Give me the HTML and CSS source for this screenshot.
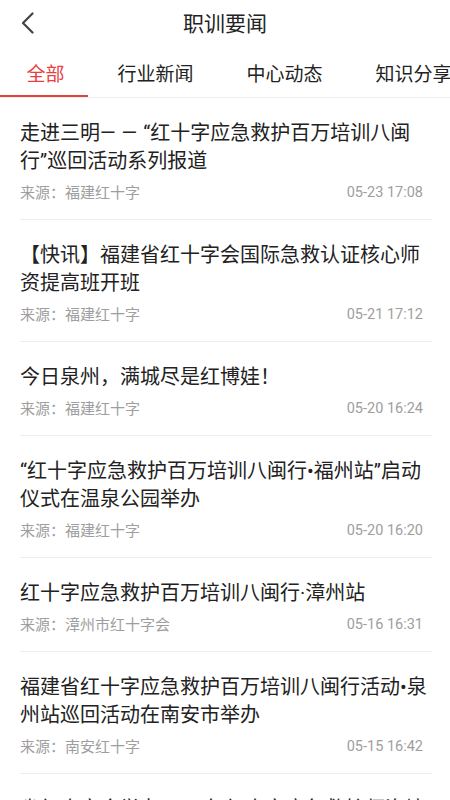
FILE: index.html
```html
<!DOCTYPE html>
<html lang="zh-CN">
<head>
<meta charset="utf-8">
<title>职训要闻</title>
<link rel="stylesheet" href="styles.css">
</head>
<body>
<header class="topbar">
  <span class="back">
    <svg width="13" height="22" viewBox="0 0 13 22"><path d="M11.5 1.5 L2 11 L11.5 20.5" fill="none" stroke="#444" stroke-width="2.2" stroke-linecap="round" stroke-linejoin="round"/></svg>
  </span>
  <h1 class="title">职训要闻</h1>
</header>
<nav class="tabs">
  <span class="tab active">全部</span>
  <span class="tab">行业新闻</span>
  <span class="tab">中心动态</span>
  <span class="tab">知识分享</span>
</nav>
<ul class="list">
  <li class="item">
    <p class="headline">走进三明<span class="dash">——</span>“红十字应急救护百万培训八闽行”巡回活动系列报道</p>
    <div class="meta"><span>来源：福建红十字</span><span class="time">05-23 17:08</span></div>
  </li>
  <li class="item">
    <p class="headline">【快讯】福建省红十字会国际急救认证核心师资提高班开班</p>
    <div class="meta"><span>来源：福建红十字</span><span class="time">05-21 17:12</span></div>
  </li>
  <li class="item">
    <p class="headline">今日泉州，满城尽是红博娃！</p>
    <div class="meta"><span>来源：福建红十字</span><span class="time">05-20 16:24</span></div>
  </li>
  <li class="item">
    <p class="headline">“红十字应急救护百万培训八闽行•福州站”启动仪式在温泉公园举办</p>
    <div class="meta"><span>来源：福建红十字</span><span class="time">05-20 16:20</span></div>
  </li>
  <li class="item">
    <p class="headline">红十字应急救护百万培训八闽行·漳州站</p>
    <div class="meta"><span>来源：漳州市红十字会</span><span class="time">05-16 16:31</span></div>
  </li>
  <li class="item">
    <p class="headline">福建省红十字应急救护百万培训八闽行活动•泉州站巡回活动在南安市举办</p>
    <div class="meta"><span>来源：南安红十字</span><span class="time">05-15 16:42</span></div>
  </li>
  <li class="item">
    <p class="headline">省红十字会举办2019年红十字应急救护师资培训班开班</p>
    <div class="meta"><span>来源：福建红十字</span><span class="time">05-14 10:20</span></div>
  </li>
</ul>
</body>
</html>
```

FILE: styles.css
```css
* { box-sizing: border-box; }
html, body {
  margin: 0;
  padding: 0;
  background: #fff;
}
body {
  font-family: Roboto, "Noto Sans CJK SC", sans-serif;
  color: #222;
  width: 450px;
  overflow: hidden;
}
.topbar {
  position: relative;
  height: 48px;
  display: flex;
  align-items: center;
  justify-content: center;
}
.back {
  position: absolute;
  left: 21px;
  top: 12px;
  display: flex;
}
.title {
  margin: 0;
  font-size: 21px;
  font-weight: normal;
  line-height: 28px;
  color: #222;
}
.tabs {
  display: flex;
  flex-wrap: nowrap;
  height: 50px;
  border-bottom: 1px solid #eeeeee;
  overflow: hidden;
  white-space: nowrap;
}
.tab {
  position: relative;
  flex: none;
  display: flex;
  align-items: center;
  padding: 0 26.5px;
  font-size: 19px;
  color: #222;
}
.tab.active {
  color: #e8403f;
}
.tab.active::after {
  content: "";
  position: absolute;
  left: 0;
  right: 3px;
  bottom: 0;
  height: 2px;
  background: #e8403f;
}
.list {
  list-style: none;
  margin: 0;
  padding: 0;
}
.item {
  margin: 0 18px 0 20px;
  padding: 21px 0 16px;
  border-bottom: 1px solid #eeeeee;
}
.headline {
  margin: 0;
  font-size: 20px;
  line-height: 28px;
  color: #222;
}
.dash {
  letter-spacing: 6px;
}
.meta {
  display: flex;
  justify-content: space-between;
  margin: 8px 9px 0 0;
  font-size: 15px;
  line-height: 20px;
  color: #9e9e9e;
}
.time {
  font-size: 14.5px;
}
```
